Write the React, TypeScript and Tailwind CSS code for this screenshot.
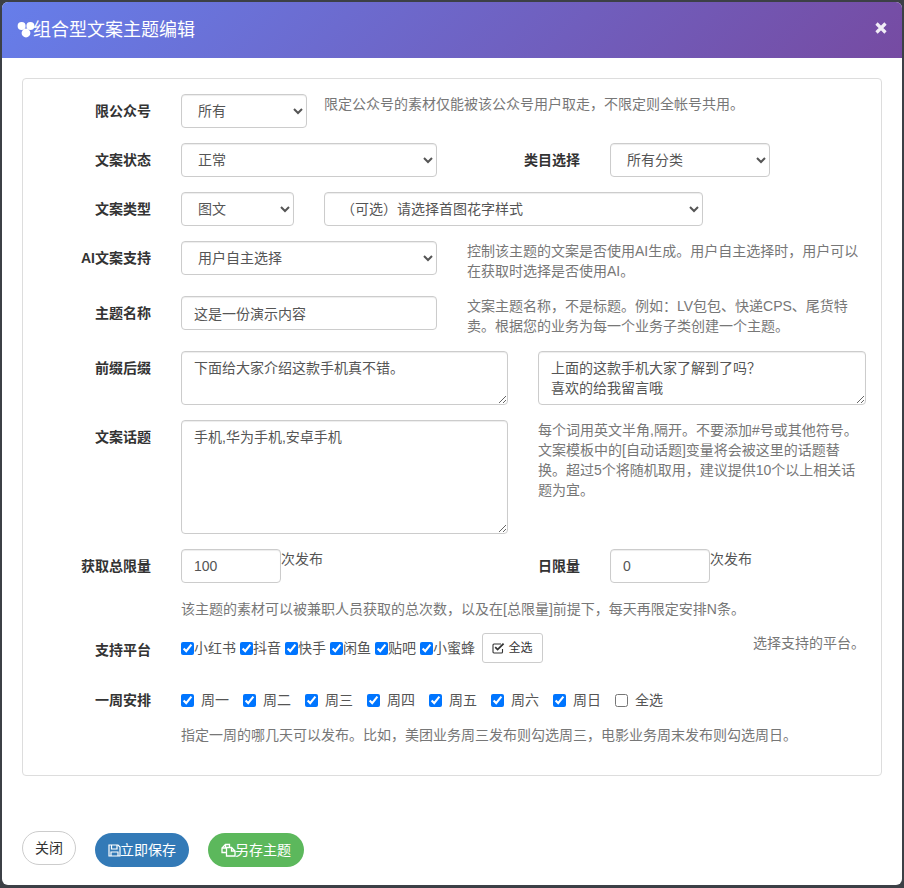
const selectCls =
  "h-[34px] rounded-[4px] border border-[#ccc] bg-white px-3 text-sm text-[#555] shadow-[inset_0_1px_1px_rgba(0,0,0,0.075)]";
const inputCls =
  "h-[34px] rounded-[4px] border border-[#ccc] bg-white px-3 text-sm text-[#555] shadow-[inset_0_1px_1px_rgba(0,0,0,0.075)]";
const areaCls =
  "block rounded-[4px] border border-[#ccc] bg-white px-3 py-[6px] text-sm leading-5 text-[#555] shadow-[inset_0_1px_1px_rgba(0,0,0,0.075)]";

function Label({ children }: { children: string }) {
  return (
    <div className="mr-[30px] flex h-[34px] w-[128px] shrink-0 items-center justify-end text-sm font-bold text-[#333]">
      {children}
    </div>
  );
}

function Help({ children, className = "" }: { children: React.ReactNode; className?: string }) {
  return <div className={`text-sm leading-5 text-[#777] ${className}`}>{children}</div>;
}

const platforms = ["小红书", "抖音", "快手", "闲鱼", "贴吧", "小蜜蜂"];
const days = ["周一", "周二", "周三", "周四", "周五", "周六", "周日"];

function Logo() {
  return (
    <svg viewBox="0 0 18 17" className="-mr-[2px] h-[17px] w-[18px] shrink-0" fill="#fff">
      <circle cx="4.6" cy="5" r="4" />
      <circle cx="13.4" cy="5" r="4" />
      <circle cx="9" cy="12" r="4.4" />
    </svg>
  );
}

function CloseIcon() {
  return (
    <svg viewBox="0 0 12 12" className="mb-[5px] h-3 w-3" fill="none" stroke="#fff" strokeOpacity="0.9" strokeWidth="3.2">
      <path d="M1.5 1.5 10.5 10.5M10.5 1.5 1.5 10.5" />
    </svg>
  );
}

function SaveIcon() {
  return (
    <svg viewBox="0 0 13 13" className="-mr-px h-[13px] w-[13px] shrink-0" fill="none" stroke="#fff" strokeWidth="1.2">
      <path d="M1 1H10L12 3V12H1Z" />
      <path d="M3.5 1V5H9V1" />
      <path d="M3 12V8H10V12" />
    </svg>
  );
}

function CopyIcon() {
  return (
    <svg viewBox="0 0 15 14" className="-mr-px h-[14px] w-[15px] shrink-0" fill="none" stroke="#fff" strokeWidth="1.3">
      <path d="M5.5 9.5H1V5L4.5 1.5H8.5V4.5" />
      <path d="M4.5 1.5V5H1" />
      <path d="M5.5 13V4.5H10.5L14 8V13Z" />
      <path d="M10.5 4.5V8H14" />
    </svg>
  );
}

function CheckSquareIcon() {
  return (
    <svg viewBox="0 0 13 12" className="h-3 w-[13px] shrink-0" fill="none" stroke="#333">
      <path d="M10.5 7V10A1 1 0 0 1 9.5 11H2A1 1 0 0 1 1 10V3A1 1 0 0 1 2 2H9" strokeWidth="1.1" />
      <path d="M3.2 5.2 5.6 7.6 11.6 1.6" strokeWidth="1.8" />
    </svg>
  );
}

export default function App() {
  return (
    <div className="h-[888px] w-[904px] overflow-hidden bg-[#3c4046] pl-[2px] pr-[2px] pt-[2px] font-['Liberation_Sans','Noto_Sans_CJK_SC',sans-serif]">
      <div className="h-[883px] rounded-[6px] bg-white">
        <div className="flex h-[56px] items-center justify-between rounded-t-[6px] bg-[linear-gradient(135deg,#667eea,#764ba2)] pl-[15px] pr-[15px]">
          <div className="mb-[1px] flex items-center text-lg text-white">
            <Logo />
            <span>组合型文案主题编辑</span>
          </div>
          <CloseIcon />
        </div>

        <div className="mx-[20px] mt-[20px] h-[698px] rounded-[4px] border border-[#ddd] pt-[15px]">
          <div className="flex items-start">
            <Label>限公众号</Label>
            <select className={`${selectCls} w-[126px]`}>
              <option>所有</option>
            </select>
            <Help className="ml-[17px]">限定公众号的素材仅能被该公众号用户取走，不限定则全帐号共用。</Help>
          </div>

          <div className="mt-[15px] flex items-start">
            <Label>文案状态</Label>
            <select className={`${selectCls} w-[256px]`}>
              <option>正常</option>
            </select>
            <div className="ml-[87px] mr-[30px] flex h-[34px] w-[56px] items-center text-sm font-bold text-[#333]">
              类目选择
            </div>
            <select className={`${selectCls} w-[160px]`}>
              <option>所有分类</option>
            </select>
          </div>

          <div className="mt-[15px] flex items-start">
            <Label>文案类型</Label>
            <select className={`${selectCls} w-[113px]`}>
              <option>图文</option>
            </select>
            <select className={`${selectCls} ml-[30px] w-[379px]`}>
              <option>（可选）请选择首图花字样式</option>
            </select>
          </div>

          <div className="mt-[15px] flex items-start">
            <Label>AI文案支持</Label>
            <select className={`${selectCls} w-[256px]`}>
              <option>用户自主选择</option>
            </select>
            <Help className="ml-[30px] w-[399px]">
              控制该主题的文案是否使用AI生成。用户自主选择时，用户可以在获取时选择是否使用AI。
            </Help>
          </div>

          <div className="mt-[15px] flex items-start">
            <Label>主题名称</Label>
            <input className={`${inputCls} w-[256px]`} defaultValue="这是一份演示内容" />
            <Help className="ml-[30px] w-[399px]">
              文案主题名称，不是标题。例如：LV包包、快递CPS、尾货特卖。根据您的业务为每一个业务子类创建一个主题。
            </Help>
          </div>

          <div className="mt-[15px] flex items-start">
            <Label>前缀后缀</Label>
            <textarea className={`${areaCls} h-[54px] w-[327px]`} defaultValue="下面给大家介绍这款手机真不错。" />
            <textarea
              className={`${areaCls} ml-[30px] h-[54px] w-[328px]`}
              defaultValue={"上面的这款手机大家了解到了吗？\n喜欢的给我留言哦"}
            />
          </div>

          <div className="mt-[15px] flex items-start">
            <Label>文案话题</Label>
            <textarea className={`${areaCls} h-[114px] w-[327px]`} defaultValue="手机,华为手机,安卓手机" />
            <Help className="ml-[30px] w-[325px]">
              每个词用英文半角,隔开。不要添加#号或其他符号。文案模板中的[自动话题]变量将会被这里的话题替换。超过5个将随机取用，建议提供10个以上相关话题为宜。
            </Help>
          </div>

          <div className="mt-[15px] flex items-start">
            <Label>获取总限量</Label>
            <input className={`${inputCls} w-[100px]`} defaultValue="100" />
            <span className="w-[257px] text-sm leading-5 text-[#555]">次发布</span>
            <div className="flex h-[34px] w-[72px] items-center text-sm font-bold text-[#333]">日限量</div>
            <input className={`${inputCls} w-[100px]`} defaultValue="0" />
            <span className="text-sm leading-5 text-[#555]">次发布</span>
          </div>

          <Help className="ml-[158px] mt-[16px]">该主题的素材可以被兼职人员获取的总次数，以及在[总限量]前提下，每天再限定安排N条。</Help>

          <div className="mt-[14px] flex items-start">
            <Label>支持平台</Label>
            <div className="flex h-[30px] items-center text-sm text-[#555]">
              {platforms.map((name) => (
                <label key={name} className="mr-1 flex items-center">
                  <input type="checkbox" defaultChecked className="m-0 h-[13px] w-[13px]" />
                  {name}
                </label>
              ))}
              <button className="ml-[3px] flex h-[30px] w-[61px] items-center justify-center gap-[3px] rounded-[3px] border border-[#ccc] bg-white text-xs text-[#333]">
                <CheckSquareIcon />
                全选
              </button>
            </div>
            <Help className="ml-[210px]">选择支持的平台。</Help>
          </div>

          <div className="mt-[16px] flex items-center">
            <Label>一周安排</Label>
            <div className="flex items-center text-sm leading-5 text-[#555]">
              {days.map((day) => (
                <label key={day} className="mr-[14px] flex items-center gap-[7px]">
                  <input type="checkbox" defaultChecked className="m-0 h-[13px] w-[13px]" />
                  {day}
                </label>
              ))}
              <label className="flex items-center gap-[7px]">
                <input type="checkbox" className="m-0 h-[13px] w-[13px]" />
                全选
              </label>
            </div>
          </div>

          <Help className="ml-[158px] mt-[8px]">指定一周的哪几天可以发布。比如，美团业务周三发布则勾选周三，电影业务周末发布则勾选周日。</Help>
        </div>

        <div className="ml-[20px] mt-[55px] flex items-start">
          <button className="h-[34px] w-[54px] rounded-full border border-[#ccc] bg-white text-sm text-[#333]">关闭</button>
          <button className="ml-[19px] mt-[2px] flex h-[34px] w-[94px] items-center justify-center rounded-full bg-[#337ab7] text-sm text-white">
            <SaveIcon />
            立即保存
          </button>
          <button className="ml-[19px] mt-[2px] flex h-[34px] w-[96px] items-center justify-center rounded-full bg-[#5cb85c] text-sm text-white">
            <CopyIcon />
            另存主题
          </button>
        </div>
      </div>
    </div>
  );
}
